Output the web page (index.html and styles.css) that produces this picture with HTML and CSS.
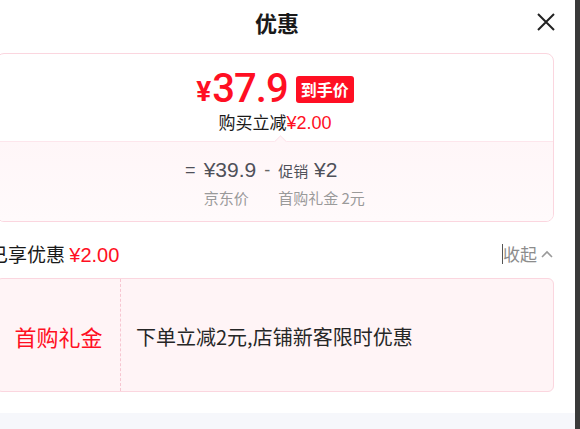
FILE: index.html
```html
<!DOCTYPE html>
<html lang="zh">
<head>
<meta charset="utf-8">
<link rel="stylesheet" href="styles.css">
</head>
<body>
<div class="screen">
  <div class="panel">
    <div class="content">
      <div class="header">
        <div class="title">优惠</div>
        <svg class="close" width="20" height="20" viewBox="0 0 20 20"><path d="M2 2 L18 18 M18 2 L2 18" stroke="#222" stroke-width="2" fill="none"/></svg>
      </div>

      <div class="card price-card">
        <div class="price-top">
          <div class="price-row">
            <span class="yen">¥</span><span class="amount">37.9</span>
            <span class="badge">到手价</span>
          </div>
          <div class="reduce">购买立减<span class="red">¥2.00</span></div>
        </div>
        <div class="price-bottom">
          <span class="notch"></span>
          <div class="formula">
            <span class="op">=</span>
            <span class="val">¥39.9</span>
            <span class="op minus">-</span>
            <span class="val"><span class="small">促销</span> ¥2</span>
            <span></span>
            <span class="lbl">京东价</span>
            <span></span>
            <span class="lbl">首购礼金 2元</span>
          </div>
        </div>
      </div>

      <div class="enjoy-row">
        <div class="enjoy">已享优惠 <span class="red">¥2.00</span></div>
        <div class="fold"><span class="caret"></span>收起<svg class="chev" width="14" height="10" viewBox="0 0 14 10"><path d="M2 8 L7 3 L12 8" stroke="#9a9a9a" stroke-width="1.6" fill="none"/></svg></div>
      </div>

      <div class="card coupon">
        <div class="coupon-name">首购礼金</div>
        <div class="coupon-desc">下单立减2元,店铺新客限时优惠</div>
      </div>
    </div>
    <div class="footer-strip"></div>
  </div>
  <div class="scrollbar"></div>
</div>
</body>
</html>
```

FILE: styles.css
```css
html, body {
  margin: 0;
  padding: 0;
  background: #fff;
}
body {
  font-family: "Liberation Sans", "Noto Sans CJK SC", sans-serif;
  color: #1a1a1a;
}
.screen {
  display: flex;
  width: 580px;
  height: 429px;
  overflow: hidden;
}
.panel {
  width: 575px;
  height: 429px;
  overflow: hidden;
  display: flex;
  flex-direction: column;
}
.scrollbar {
  width: 5px;
  height: 429px;
  background: #3a3a3a;
}
.content {
  margin-left: -4px;
  width: 558px;
}
.header {
  height: 44px;
  margin-bottom: 9px;
  padding-left: 4px;
  display: flex;
  align-items: center;
  justify-content: center;
  position: relative;
}
.title {
  font-family: "Noto Sans CJK SC", sans-serif;
  font-weight: 700;
  font-size: 22px;
  line-height: 44px;
  color: #1a1a1a;
}
.close {
  position: absolute;
  right: -2px;
  top: 12px;
}
.card {
  border: 1px solid #fbd6df;
  border-radius: 8px;
  box-sizing: border-box;
}
.price-card {
  overflow: hidden;
}
.price-top {
  padding: 13px 0 7px;
  display: flex;
  flex-direction: column;
  align-items: center;
}
.price-row {
  height: 44px;
  display: flex;
  align-items: center;
  color: #ff0f23;
}
.yen {
  font-family: "Roboto", sans-serif;
  font-weight: 700;
  font-size: 28px;
  line-height: 44px;
  margin-top: 5px;
  margin-right: 1px;
}
.amount {
  font-family: "Roboto", sans-serif;
  font-weight: 500;
  font-size: 40px;
  letter-spacing: -1px;
  line-height: 44px;
}
.badge {
  margin-left: 8px;
  height: 27px;
  padding: 0 5px;
  border-radius: 3px;
  background: #ff0f23;
  color: #fff;
  font-family: "Noto Sans CJK SC", sans-serif;
  font-weight: 700;
  font-size: 16px;
  line-height: 27px;
}
.reduce {
  font-family: "Noto Sans CJK SC", "Liberation Sans", sans-serif;
  font-size: 17px;
  line-height: 22px;
  color: #1a1a1a;
}
.reduce .red {
  font-family: "Liberation Sans", sans-serif;
  font-size: 18px;
}
.red {
  color: #ff0f23;
}
.price-bottom {
  position: relative;
  border-top: 1px solid #fde6ec;
  background: linear-gradient(180deg, #fff6f8 0%, #fffafb 100%);
  padding: 16px 0 12px;
}
.notch {
  position: absolute;
  left: 279px;
  top: -5px;
  width: 8px;
  height: 8px;
  background: #fff6f8;
  border-top: 1px solid #fde6ec;
  border-left: 1px solid #fde6ec;
  transform: rotate(45deg);
}
.formula {
  display: grid;
  grid-template-columns: auto auto auto auto;
  justify-content: center;
  column-gap: 8px;
  row-gap: 4px;
  color: #4f5159;
}
.op {
  font-family: "Liberation Sans", sans-serif;
  font-size: 18px;
  line-height: 24px;
}
.minus {
  color: #666;
}
.val {
  font-family: "Liberation Sans", sans-serif;
  font-size: 21px;
  line-height: 24px;
  white-space: nowrap;
}
.small {
  font-family: "Noto Sans CJK SC", sans-serif;
  font-size: 15px;
}
.lbl {
  font-family: "Noto Sans CJK SC", "Liberation Sans", sans-serif;
  font-size: 15px;
  line-height: 22px;
  color: #9a9a9a;
  white-space: nowrap;
}
.enjoy-row {
  display: flex;
  justify-content: space-between;
  align-items: center;
  padding: 20px 0 12px;
  height: 24px;
  box-sizing: content-box;
}
.enjoy {
  margin-left: -7px;
  font-family: "Noto Sans CJK SC", sans-serif;
  font-size: 19px;
  line-height: 24px;
  color: #1a1a1a;
  white-space: nowrap;
}
.enjoy .red {
  font-family: "Liberation Sans", sans-serif;
  font-size: 20px;
}
.fold {
  display: flex;
  align-items: center;
  font-family: "Noto Sans CJK SC", sans-serif;
  font-size: 17px;
  line-height: 24px;
  color: #8c8c8c;
}
.caret {
  width: 1px;
  height: 20px;
  background: #555;
}
.chev {
  margin-left: 3px;
}
.coupon {
  height: 114px;
  border-radius: 6px;
  background: #fff4f6;
  display: flex;
  align-items: stretch;
}
.coupon-name {
  width: 124px;
  flex: none;
  border-right: 1px dashed #f7c6d1;
  display: flex;
  align-items: center;
  justify-content: center;
  font-family: "Noto Sans CJK SC", sans-serif;
  font-size: 22px;
  color: #ff0f23;
  padding-top: 2px;
  box-sizing: border-box;
}
.coupon-desc {
  display: flex;
  align-items: center;
  padding-left: 15px;
  font-family: "Noto Sans CJK SC", "Liberation Sans", sans-serif;
  font-size: 20px;
  color: #262626;
  padding-top: 2px;
}
.footer-strip {
  margin-top: 21px;
  height: 17px;
  background: #f6f7fb;
}
```
